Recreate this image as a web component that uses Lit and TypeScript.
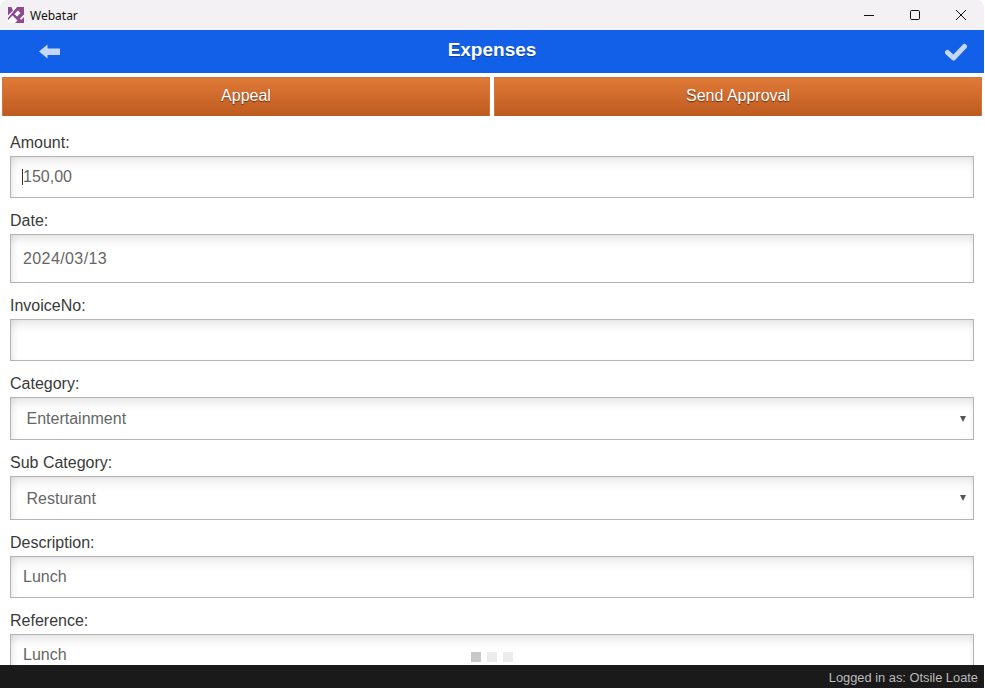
import { LitElement, html, css } from "lit";
import { customElement } from "lit/decorators.js";

@customElement("app-root")
export class AppRoot extends LitElement {
  static styles = css`
    :host { display: flex; flex-direction: column; width: 984px; height: 688px; overflow: hidden; position: relative; background: #fff; font-family: "Liberation Sans", Arial, sans-serif; color: #3a3a3a; }
    * { box-sizing: border-box; }
    .titlebar { height: 30px; flex: none; background: #f3f1f3; border-radius: 7px 7px 0 0; display: flex; align-items: center; padding-left: 8px; font-family: "Noto Sans", sans-serif; font-size: 12px; color: #111; }
    .logo { width: 16px; height: 16px; margin-right: 6px; }
    .winbtns { margin-left: auto; display: flex; }
    .winbtn { width: 46px; height: 30px; display: flex; align-items: center; justify-content: center; }
    .header { height: 43px; flex: none; background: #1260e8; display: grid; grid-template-columns: 1fr auto 1fr; align-items: center; padding: 0 17px 0 39px; }
    .header svg:last-child { justify-self: end; }
    .title { font-weight: 700; font-size: 19px; color: #fff; text-shadow: 0 1px 1px rgba(0,0,0,.3); margin: -4px 11px 0 -11px; }
    .actions { flex: none; display: flex; gap: 4px; padding: 4px 2px 0 2px; }
    .btn { flex: 1; height: 39px; padding-bottom: 2px; display: flex; align-items: center; justify-content: center; color: #fff; font-size: 16px; border: 1px solid #d0763c; border-bottom: none; background: linear-gradient(#e07a38, #bd5a1f); text-shadow: 0 1px 1px rgba(60,20,0,.7); }
    .form { flex: 1; min-height: 0; overflow: hidden; padding: 4px 10px 0 10px; }
    label { display: block; height: 36px; padding-top: 14px; line-height: 18px; font-size: 16px; color: #3a3a3a; white-space: nowrap; }
    .field { position: relative; height: 42px; border: 1px solid #b4b4b4; box-shadow: inset 0 11px 12px -8px rgba(0,0,0,.13), inset 6px 0 6px -4px rgba(0,0,0,.09), inset -5px 0 6px -4px rgba(0,0,0,.05); }
    .field.date { height: 49px; }
    .field.cat { height: 43px; }
    .field.sub { height: 44px; }
    input, select { display: block; width: 100%; height: 100%; border: 0; outline: 0; background: transparent; font: 16px "Liberation Sans", Arial, sans-serif; color: #666; padding: 0 12px; border-radius: 0; }
    .date input { letter-spacing: .4px; }
    select { appearance: none; padding-left: 15.5px; }
    .caret { position: absolute; left: 11px; top: 12px; width: 1px; height: 16px; background: #333; }
    .arrow { position: absolute; right: 7px; top: 50%; margin-top: -3px; width: 0; height: 0; border-left: 3px solid transparent; border-right: 3px solid transparent; border-top: 6px solid #555; }
    .footer { position: relative; flex: none; height: 23px; padding-top: 2px; background: #1a1a1a; color: #bbb; font-size: 12.85px; display: flex; align-items: center; justify-content: flex-end; padding-right: 6px; }
    .dots { position: absolute; left: 471px; top: 652px; display: flex; gap: 6px; }
    .dot { width: 10px; height: 10px; background: #ececec; }
    .dot.on { background: #c8c8c8; }
  `;

  render() {
    return html`
      <div class="titlebar">
        <svg class="logo" viewBox="0 0 16 16">
          <rect width="16" height="16" fill="#8e4a8e"/>
          <path d="M0 8.5L5 3.5L3.5 0H9L0 11Z" fill="#fff"/>
          <path d="M0 16V13L4.5 8.5L9.5 13.5L7 16Z" fill="#fff"/>
          <path d="M6.5 7L10 3.5L12.5 6L9 9.5Z" fill="#fff"/>
          <path d="M12 11.5L16 7.5V10L13 13Z" fill="#fff"/>
        </svg>
        Webatar
        <div class="winbtns">
          <div class="winbtn"><svg width="12" height="12" viewBox="0 0 12 12"><path d="M1 6.5H11" stroke="#111" fill="none"/></svg></div>
          <div class="winbtn"><svg width="12" height="12" viewBox="0 0 12 12"><rect x="1.5" y="1.5" width="9" height="9" rx="1.2" stroke="#111" fill="none"/></svg></div>
          <div class="winbtn"><svg width="12" height="12" viewBox="0 0 12 12"><path d="M1 1L11 11M11 1L1 11" stroke="#111" fill="none"/></svg></div>
        </div>
      </div>
      <div class="header">
        <svg width="21" height="15" viewBox="0 0 21 15"><path d="M0 7.5L8.5 0.5V4.5H21V11H8.5V14.5Z" fill="#c5d8fb"/></svg>
        <div class="title">Expenses</div>
        <svg width="22" height="18" viewBox="0 0 22 18"><path d="M2.5 9.5L8.5 15L19.5 3.5" stroke="#c5d8fb" stroke-width="5" fill="none" stroke-linecap="round" stroke-linejoin="round"/></svg>
      </div>
      <div class="actions">
        <div class="btn">Appeal</div>
        <div class="btn">Send Approval</div>
      </div>
      <div class="form">
        <label>Amount:</label>
        <div class="field"><input .value=${"150,00"} /><span class="caret"></span></div>
        <label>Date:</label>
        <div class="field date"><input .value=${"2024/03/13"} /></div>
        <label>InvoiceNo:</label>
        <div class="field"><input /></div>
        <label>Category:</label>
        <div class="field cat"><select><option>Entertainment</option></select><span class="arrow"></span></div>
        <label>Sub Category:</label>
        <div class="field sub"><select><option>Resturant</option></select><span class="arrow"></span></div>
        <label>Description:</label>
        <div class="field"><input .value=${"Lunch"} /></div>
        <label>Reference:</label>
        <div class="field"><input .value=${"Lunch"} /></div>
      </div>
      <div class="footer">Logged in as: Otsile Loate</div>
      <div class="dots"><span class="dot on"></span><span class="dot"></span><span class="dot"></span></div>
    `;
  }
}
